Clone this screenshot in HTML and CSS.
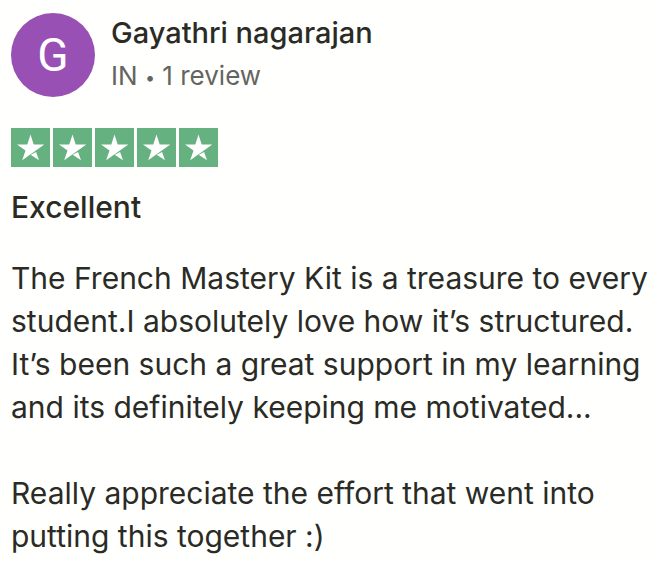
FILE: index.html
```
<!DOCTYPE html>
<html lang="en">
<head>
    <meta charset="UTF-8">
    <meta name="viewport" content="width=device-width, initial-scale=1.0">
    <title>Customer Review</title>
    <link rel="stylesheet" href="styles.css">
</head>
<body>
    <svg class="defs" aria-hidden="true">
        <symbol id="star" viewBox="0 0 39 39">
            <path d="M19.5 6.5l3.2 10h10.6L11.2 32.2l3.3-9.8L6 16.5h10.3z"/>
            <path d="M19.7 26.7l5.4-2.8 2.9 8.3z"/>
        </symbol>
    </svg>

    <article class="review">
        <header class="reviewer">
            <div class="avatar">G</div>
            <div class="details">
                <h2 class="name">Gayathri nagarajan</h2>
                <p class="meta">IN <span class="dot">•</span> 1 review</p>
            </div>
        </header>

        <div class="rating" role="img" aria-label="Rated 5 out of 5 stars">
            <svg class="star"><use href="#star"/></svg>
            <svg class="star"><use href="#star"/></svg>
            <svg class="star"><use href="#star"/></svg>
            <svg class="star"><use href="#star"/></svg>
            <svg class="star"><use href="#star"/></svg>
        </div>

        <h3 class="title">Excellent</h3>

        <p class="text">The French Mastery Kit is a treasure to every<br>student.I absolutely love how it’s structured.<br>It’s been such a great support in my learning<br>and its definitely keeping me motivated...</p>
        <p class="text">Really appreciate the effort that went into<br>putting this together :)</p>
    </article>
</body>
</html>
```

FILE: styles.css
```
body {
    margin: 0;
    background-color: #fffffe;
    color: #2b2b26;
    font-family: Inter, "Liberation Sans", sans-serif;
}
h2, h3, p {
    margin: 0;
}
.defs {
    display: none;
}
.review {
    padding: 11px 0 0 11px;
}
.reviewer {
    display: flex;
    align-items: flex-end;
    gap: 16px;
}
.avatar {
    display: flex;
    align-items: center;
    justify-content: center;
    width: 84px;
    height: 84px;
    border-radius: 50%;
    background-color: #9850b4;
    color: #fff;
    font-family: Roboto, sans-serif;
    font-size: 46px;
}
.name {
    font-size: 29px;
    font-weight: 500;
    line-height: 43px;
}
.meta {
    color: #65655f;
    font-size: 26px;
    line-height: 43px;
}
.dot {
    font-size: 18px;
    line-height: 1;
    vertical-align: middle;
}
.rating {
    display: flex;
    gap: 3px;
    margin-top: 31px;
}
.star {
    width: 39px;
    height: 39px;
    background-color: #65b17f;
    fill: #fff;
}
.title {
    margin-top: 19px;
    font-size: 30px;
    font-weight: 500;
    line-height: 43px;
}
.text {
    margin-top: 28px;
    font-size: 30px;
    line-height: 43px;
}
.text + .text {
    margin-top: 43px;
}
```
